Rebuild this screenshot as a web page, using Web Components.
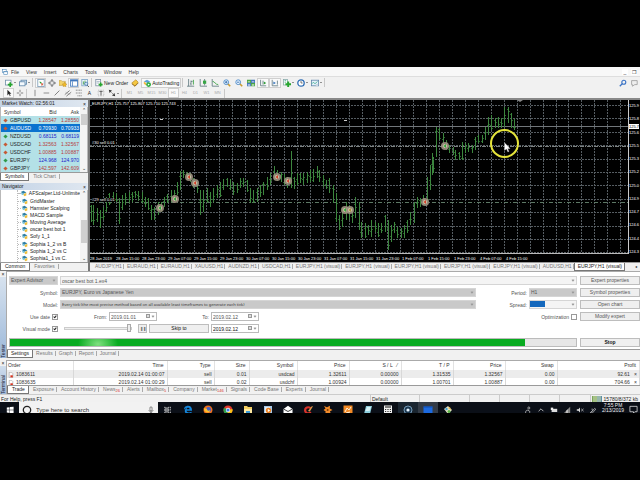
<!DOCTYPE html>
<html lang="en">
<head>
<meta charset="utf-8">
<title>Trading terminal</title>
<style>
  html, body { height: 100%; }
  body { margin: 0; background: #000; overflow: hidden; font: 5px/8px "Liberation Sans", Arial, sans-serif; color: #222; }
</style>
</head>
<body>
<trading-desktop></trading-desktop>

<script>
const RESET = `
  :host, *, *::before { box-sizing: border-box; }
  button, input, select, a { font: inherit; color: inherit; margin: 0; padding: 0; border: 0; border-radius: 0; background: none; text-decoration: none; appearance: none; outline: 0; }
  button { white-space: nowrap; }
  svg { display: block; flex: none; }
`;
function define(name, css, html) {
  customElements.define(name, class extends HTMLElement {
    constructor() {
      super();
      const root = this.attachShadow({ mode: 'open' });
      const t = document.createElement('template');
      t.innerHTML = `<style>${RESET}${css}</style>` + (typeof html === 'function' ? html(this) : html);
      root.append(t.content.cloneNode(true));
    }
  });
}

/* ---------- icons ---------- */
const ICONS = {
  app: '<rect x="1" y="1" width="6" height="5" fill="#fff" stroke="#4b86b8"/><rect x="3" y="4" width="6" height="5" fill="#fff" stroke="#4b86b8"/><path d="M3 4.500h6" stroke="#4b86b8"/>',
  newchart: '<rect x=".5" y="1.500" width="7" height="6" fill="#fff" stroke="#6e8fa8"/><path d="M6.500 4v6M3.500 7h6" stroke="#25a52c" stroke-width="2"/>',
  profile: '<rect x="2.500" y="1.500" width="7" height="5" fill="#dbeaf6" stroke="#5f87ab"/><rect x=".5" y="3.500" width="7" height="5" fill="#f4f9fd" stroke="#5f87ab"/>',
  market: '<rect x="1" y=".5" width="8" height="9" fill="#fff" stroke="#7a9ab5"/><path d="M3 3l3 1-2 2z" fill="#2b9c33"/><path d="M5 5l3 1-2 3z" fill="#d14a2e"/>',
  target: '<circle cx="5" cy="5" r="3" fill="#fff" stroke="#7b7f84"/><path d="M5 0v4M5 6v4M0 5h4M6 5h4" stroke="#555"/>',
  folder: '<path d="M0 2h3l1 1h4v5H0z" fill="#f3d36a" stroke="#b38e2d" stroke-width=".6"/><path d="M7 4l1 2 2 .3-1.500 1.500.3 2L7 9l-1.800.8.3-2L4 6.300 6 6z" fill="#f3bd28" stroke="#a5761c" stroke-width=".4"/>',
  term: '<rect x=".5" y="1" width="9" height="8" fill="#fff" stroke="#3f77bd"/><path d="M.5 2h9" stroke="#3f77bd" stroke-width="2"/><path d="M3 3v6" stroke="#3f77bd"/>',
  tester: '<rect x="1" y=".5" width="7" height="8" fill="#eef5fb" stroke="#7aa1c5"/><path d="M3 7V3M5 7V2" stroke="#3b9c3b"/><circle cx="6.500" cy="6" r="2" fill="#cfe3f5" stroke="#4679ab"/><path d="M8 8l2 2" stroke="#444"/>',
  order: '<rect x="1" y=".5" width="6" height="8" fill="#fff" stroke="#7a8ea2"/><path d="M2 3h4M2 5h3" stroke="#9ab"/><path d="M7 4.500v5M4.500 7h5" stroke="#25a52c" stroke-width="2"/>',
  book: '<path d="M1 5l5-4 3 3-4 5z" fill="#f5c842" stroke="#a87a18" stroke-width=".7"/><path d="M1 6l4 3 4-4" fill="none" stroke="#8f6414"/>',
  auto: '<path d="M1 3l4-2 4 2-3 2z" fill="#5aa0d8"/><path d="M1 3v3l3 2V5z" fill="#f1b943"/><circle cx="7" cy="7" r="3" fill="#25a83a"/><path d="M6 5.500v3L8.500 7z" fill="#fff"/>',
  bars: '<path d="M2 0v9M0 9h9M5 2v6M4 6h1M5 3h2" fill="none" stroke="#59747b"/><path d="M8 1v6" stroke="#2b9c33"/>',
  candles: '<path d="M1.500 0v9H10M7 0v8" stroke="#59747b" fill="none"/><rect x="5" y="2" width="4" height="4" fill="#36a544"/>',
  line: '<path d="M1.500 0v9H10" stroke="#59747b" fill="none"/><path d="M2 3c3 0 3 4 7 4" fill="none" stroke="#2b9c33"/>',
  zin: '<path d="M6 6l3 3" stroke="#c99b2e" stroke-width="2"/><circle cx="4" cy="4" r="3" fill="#e9f4ff" stroke="#3b7fc4"/><path d="M2.500 4h3M4 2.500v3" stroke="#245fa5"/>',
  zout: '<path d="M6 6l3 3" stroke="#c99b2e" stroke-width="2"/><circle cx="4" cy="4" r="3" fill="#e9f4ff" stroke="#3b7fc4"/><path d="M2.500 4h3" stroke="#245fa5"/>',
  tile: '<path d="M0 1h5v4H0zM5 5h5v4H5z" fill="#4aa546"/><path d="M5 1h5v4H5zM0 5h5v4H0z" fill="#4176bb"/><path d="M1 3h3v1H1zM6 3h3v1H6zM1 7h3v1H1zM6 7h3v1H6z" fill="#fff"/>',
  scroll: '<path d="M2 1v7.500h7M5 2v5" stroke="#59747b" fill="none"/><path d="M6 3l3 2-3 2z" fill="#2b9c33"/>',
  shift: '<path d="M1.500 1v7.500H9M8 2v5" stroke="#59747b" fill="none"/><path d="M3 3l3 2-3 2z" fill="#3877bd"/>',
  indic: '<rect x=".5" y=".5" width="5" height="7" fill="#fff" stroke="#8aa"/><path d="M2 2h2M2 4h2" stroke="#4a8"/><path d="M6.500 3v7M3 6.500h7" stroke="#25a52c" stroke-width="2.400"/>',
  clock: '<circle cx="5" cy="5" r="4" fill="#fff" stroke="#2d6cb4" stroke-width="1.600"/><path d="M5 2.500V5h2" fill="none" stroke="#333" stroke-width=".8"/>',
  tmpl: '<rect x=".5" y="1.500" width="9" height="7" fill="#e4f0fa" stroke="#5f87ab"/><path d="M1 6l2-2 2 2 3-3" stroke="#3a8" fill="none"/><path d="M6 6h3v3H6z" fill="#c8d6e2"/>',
  cursor: '<path d="M3 1v7l2-2 1 3 1-.5L6 6h2z" fill="#222"/>',
  cross: '<path d="M5 1v3M5 6v3M1 5h3M6 5h3" stroke="#666"/>',
  vert: '<path d="M5 1v8" stroke="#777"/>', horiz: '<path d="M2 5h7" stroke="#777"/>', trend: '<path d="M2 8l6-6" stroke="#666"/>',
  channel: '<path d="M1 7l6-5M3 9l6-5" stroke="#666"/><path d="M2 4l6 3" stroke="#999" stroke-width=".6"/>',
  fibo: '<path d="M1 1.500h8M1 5h8M3 8.500h6" stroke="#777" stroke-dasharray="1.500 .5"/>',
  label: '<rect x="1.500" y="1.500" width="7" height="7" fill="none" stroke="#aaa" stroke-dasharray="1 1"/><path d="M3 3h4M5 3v5" stroke="#444"/>',
  arrows: '<path d="M1 1l4 1-3 3zM9 9L5 8l3-3z" fill="#333"/><path d="M4 4l3 3" stroke="#888"/>',
  search: '<circle cx="6" cy="4" r="2.500" fill="none" stroke="#3c74c6" stroke-width="1.400"/><path d="M4 6L1 9" stroke="#3c74c6" stroke-width="1.600"/>',
  chat: '<path d="M2 2h7v5H6L3 9V7H2z" fill="#eee" stroke="#999"/>',
  win: '<path d="M1 2l3.500-.5v3.300H1zM5 1.400L9.500.8v4H5zM1 5.300h3.500v3.300L1 8.100zM5 5.300h4.500v4L5 8.700z" fill="#fff"/>',
  ring: '<circle cx="5" cy="5" r="3.700" fill="none" stroke="#222" stroke-width="1.300"/>',
  mic: '<rect x="3.700" y="1" width="2.600" height="5" rx="1.300" fill="none" stroke="#333" stroke-width=".7"/><path d="M2.500 5c0 3 5 3 5 0M5 7.500V9M3.500 9h3" fill="none" stroke="#333" stroke-width=".7"/>',
  tasks: '<path d="M1 1v1.500h5V1M1 9V7.500h5V9M1 4h5v2H1zM8 1v2M8 4v1.500M8 7v2" fill="none" stroke="#ddd"/>',
  edge: '<path d="M1 5C1 1.500 3.500.8 5 .8c3 0 4.200 2.200 4 4.900H3.500c.2 2 3 2.100 5 1.100v2C4.500 10.500 1.500 8.500 1.800 5.500 2.300 3.800 3.500 3 4.500 2.800 2.800 2.800 1.600 3.800 1 5zM3.700 4.200h2.900C6.500 2.400 4 2.400 3.700 4.200z" fill="#1688dd"/>',
  firefox: '<circle cx="5" cy="5" r="4.500" fill="#f0701f"/><circle cx="5.500" cy="4.500" r="2.500" fill="#4761c4"/><path d="M.8 3C2 4 3 3 4 4c0 2 2 2 3 1 0 3-3 3-4 2C1 6 1 5 .8 3z" fill="#ffbe2b"/>',
  chrome: '<circle cx="5" cy="5" r="4.500" fill="#e33b2e"/><path d="M5 5L1.100 2.800A4.500 4.500 0 0 0 4.500 9.500z" fill="#2ba24c"/><path d="M5 5L9.400 4A4.500 4.500 0 0 1 4.500 9.500z" fill="#fbc116"/><circle cx="5" cy="5" r="2.200" fill="#fff"/><circle cx="5" cy="5" r="1.600" fill="#3f7fe8"/>',
  explorer: '<path d="M1 1h3l1 1h4v7H1z" fill="#f3cf62"/><path d="M1 4h8v5H1z" fill="#ffe9a0"/><path d="M3 6h4v3H3z" fill="#3c9ad6"/>',
  media: '<rect x="1" y="1" width="8" height="8" fill="#a9c9e8"/><rect x="2" y="2" width="5" height="6" fill="#e5eef6"/><circle cx="5.500" cy="5.500" r="2.700" fill="#ee8322"/><path d="M4.800 4v3l2.400-1.500z" fill="#fff"/>',
  mail: '<path d="M.5 4L5 .8 9.500 4v5h-9z" fill="#fff"/><path d="M.8 4.200L5 6.500l4.200-2.300" fill="none" stroke="#111" stroke-width=".8"/>',
  ccl: '<path d="M8.500 2.500C5 0 1 2 1 5.200 1 9 5.500 10 8.500 8L7.500 6.500C5 8 3.300 7 3.300 5.200 3.300 3.400 5.500 2.700 7 4z" fill="#d8332b"/><path d="M5 6l4-5 .8.6-3 5z" fill="#e3a34c"/>',
  star: '<path d="M1 1l3 1.200L7 .8l-.2 2.700L9.500 5 7 6.200 8 9.500 5 8 2 9.500l.7-3L.5 5l2-1.500z" fill="#f28b2a"/><circle cx="4.600" cy="5" r="1" fill="#7b3d08"/>',
  orange: '<rect x=".5" y=".5" width="9" height="9" fill="#f28a26"/><path d="M2 7l2-4 2 2 2-3M3 8l4-1" fill="none" stroke="#fff2dd"/>',
  note: '<path d="M3 1h6L7 9H1z" fill="#8fd0de"/><path d="M4 2h4L6.500 6h-4z" fill="#d7f2f6"/>',
  calc: '<rect x="1" y=".5" width="8" height="9" fill="#f3f3f3"/><path d="M2 2h6" stroke="#333" stroke-width="1.200"/><path d="M2 4.500h6M2 6.500h6M2 8.500h6" stroke="#333" stroke-dasharray="1.200 1.200"/>',
  rec: '<circle cx="5" cy="5" r="4" fill="#1c3850" stroke="#7fa6c4" stroke-width=".9"/><circle cx="5" cy="5" r="1.600" fill="#e8f4ff"/>',
  bluewin: '<rect x=".5" y="1.500" width="9" height="7" fill="#1c6ae0"/><path d="M.5 2h9" stroke="#0f4cb0"/>',
  paint: '<path d="M1 4l4-3 4 4-4 4z" fill="#e8e2c4"/><circle cx="3.500" cy="4" r="1.200" fill="#3d9fd8"/><circle cx="6" cy="6.500" r="1.500" fill="#5cb548"/><path d="M5 3l3 2-1-3z" fill="#e4b43a"/>',
  people: '<circle cx="6" cy="2.500" r="1.300" fill="none" stroke="#ddd" stroke-width=".8"/><path d="M2 9c0-4 2-4 3-3.500C7 6 8 7 7 8.500" fill="none" stroke="#ddd" stroke-width=".9"/>',
  up: '<path d="M2 6.500l3-3 3 3" fill="none" stroke="#ddd"/>',
  batt: '<rect x="2" y="3.500" width="7" height="4" fill="#ddd"/><path d="M1 2h3v3H1z" fill="#eee"/>',
  wifi: '<path d="M1 9L9 1v8z" fill="#888"/><path d="M4 9V6l2-2v5z" fill="#ccc"/>',
  vol: '<path d="M1 4h2l2-2v6L3 6H1z" fill="#ddd"/><path d="M6.500 3.500l3 3M9.500 3.500l-3 3" stroke="#ddd" stroke-width=".8"/>',
  pen: '<path d="M2 9l5-6 1.500 1L4 9c-2 1-3-1-1-2s3-4 0-3" fill="none" stroke="#ddd" stroke-width=".8"/>',
  notif: '<path d="M1 1.500h8v6H6.500L5 9V7.500H1z" fill="none" stroke="#eee" stroke-width=".8"/>',
  expert: '<path d="M1 3l4-2 4 2.500-4 2z" fill="#2f7fa3"/><path d="M2 4v2l3 1.500V5.500z" fill="#58b3cf"/><path d="M5 6l4-2v4L6 9z" fill="#f0c03c"/>',
  doc: '<path d="M2 .5h4l2 2v7H2z" fill="#fff" stroke="#777" stroke-width=".7"/><path d="M4 5.500h4V9H4z" fill="#d8321e"/>',
};
const icon = (n, s = 9) => `<svg width="${s}" height="${s}" viewBox="0 0 10 10" aria-hidden="true">${ICONS[n]}</svg>`;

/* ---------- tabs ---------- */
define('tab-strip', `
  :host { display: flex; height: 9px; align-items: stretch; background: #f1f1f1; border-top: 1px solid #9a9a9a; overflow: hidden; flex: none; padding-left: var(--start, 0px); }
  button { padding: 0 var(--pad-r, 4px) 0 var(--pad-l, 4px); line-height: 7px; color: #777; position: relative; display: flex; flex: none; }
  button:not(.on)::after { content: ""; width: 1px; height: 5px; background: #aaa; position: absolute; right: 0; top: 1px; }
  button.on { background: #fff; color: #222; border: 1px solid #777; border-top: 0; line-height: 7px; }
  sub { color: #d6322c; font-size: 4px; line-height: 9px; vertical-align: baseline; }
  ::slotted(*) { margin-left: auto; padding-right: 3px; color: #222; font-size: 4px; line-height: 7px; }
`, el => el.getAttribute('tabs').split('|').map((t, i) => {
  const [a, b] = t.split('~');
  return `<button type="button" class="${i == el.getAttribute('active') ? 'on' : ''}">${a}${b ? `<sub>${b}</sub>` : ''}</button>`;
}).join('') + '<slot></slot>');

/* ---------- menu ---------- */
define('menu-bar', `
  :host { display: flex; flex: none; height: 10px; align-items: center; padding: 0 3px 0 2px; background: #f8f8f8; border-bottom: 1px solid #dedede; color: #333; }
  svg { margin-right: 3px; }
  button { margin-right: 7px; line-height: 8px; }
  .w { margin: 0 0 0 3px; background: #fff; width: 6px; line-height: 6px; }
  i { flex: 1; }
`, icon('app', 6) + ['File', 'View', 'Insert', 'Charts', 'Tools', 'Window', 'Help'].map(x => `<button type="button">${x}</button>`).join('') +
  '<i></i><button type="button" class="w" aria-label="Minimize">_</button><button type="button" class="w" aria-label="Restore">❐</button>');

/* ---------- toolbars ---------- */
const tb = (n, w = 'n', extra = '', cls = '') => `<button type="button" class="${w} ${cls}" aria-label="${n}">${icon(n, 8)}${extra}</button>`;
define('tool-bars', `
  :host { display: flex; flex: none; flex-direction: column; background: #f1f1f1; height: 23px; border-bottom: 2px solid #888; color: #222; }
  div { display: flex; height: 11px; align-items: center; padding: 0 1px 0 3px; }
  div + div { height: 10px; }
  button { display: flex; align-items: center; justify-content: center; height: 10px; flex: none; gap: 1px; }
  .n { width: 11px; } .m { width: 12px; } .d { width: 14px; } .t { font-size: 5px; padding: 0 1px; }
  .d::after { content: ""; border: 1px solid transparent; border-top: 1px solid #333; margin-top: 1px; }
  .on { background: #fafafa; border: 1px solid #cfcfcf; }
  .tf { width: 11px; color: #aaa; font-size: 4px; }
  hr { width: 1px; height: 9px; margin: 0 2px 0 1px; border: 0; background: #c8c8c8; flex: none; }
  i { flex: 1; }
`, `<div>${tb('newchart', 'd')}${tb('profile', 'd')}<hr>${tb('market', 'n', '', 'on')}${tb('target')}${tb('folder')}${tb('term', 'n', '', 'on')}${tb('tester')}<hr>
  ${tb('order', 't', '<span>New Order</span>')}${tb('book', 'm')}${tb('auto', 't', '<span>AutoTrading</span>', 'on')}<hr>
  ${['bars', 'candles', 'line', 'zin', 'zout', 'tile'].map(x => tb(x, 'm')).join('')}${tb('scroll', 'm', '', 'on')}${tb('shift', 'm', '', 'on')}${tb('indic', 'd')}${tb('clock', 'd')}${tb('tmpl', 'd')}<hr>
  <i></i>${tb('search', 'n')}${tb('chat', 'n')}</div>
  <div>${tb('cursor', 'n', '', 'on')}${tb('cross')}<hr>${['vert', 'horiz', 'trend', 'channel', 'fibo'].map(x => tb(x)).join('')}<button type="button" class="n">A</button>${tb('label')}${tb('arrows', 'd')}<hr>
  ${['M1', 'M5', 'M15', 'M30', 'H1', 'H4', 'D1', 'W1', 'MN'].map(x => `<button type="button" class="tf ${x == 'H1' ? 'on' : ''}">${x}</button>`).join('')}<hr></div>`);

/* ---------- side panels ---------- */
define('dock-panel', `
  :host { display: flex; flex-direction: column; }
  header { display: flex; flex: none; justify-content: space-between; align-items: center; height: 7px; padding: 0 2px; background: linear-gradient(90deg, #c3d3e6, #dfe7f0); color: #222; line-height: 7px; }
  header button { line-height: 6px; }
  section { display: flex; background: #fff; border: 1px solid #b9b9b9; border-width: 0 1px; flex: 1; min-height: 0; overflow: hidden; }
  .body { flex: 1; min-width: 0; overflow: hidden; display: flex; flex-direction: column; }
  .bar { width: 7px; flex: none; background: #f4f4f4; display: flex; flex-direction: column; align-items: center; font-size: 5px; line-height: 7px; }
  .thumb { width: 6px; background: #cfcfcf; }
  .bar span:first-child { margin-bottom: auto; }
`, el => `<header><span>${el.getAttribute('label')}</span><button type="button" aria-label="Close">×</button></header>
  <section><div class="body"><slot></slot></div><div class="bar"><span>⌃</span><span class="thumb" style="height:${el.getAttribute('thumb')}px;margin-bottom:${el.getAttribute('after')}px"></span><span>⌄</span></div></section>`);

define('quote-table', `
  :host { display: block; }
  table { width: 100%; border-collapse: collapse; table-layout: fixed; line-height: 8px; }
  th { font-weight: 400; text-align: right; height: 9px; color: #333; background: #fff; }
  td { height: 8px; text-align: right; background: #b4e1e7; line-height: 8px; }
  th, td { padding: 0 1px 0 0; }
  th:first-child, td:first-child { text-align: left; width: 43%; }
  th:first-child { padding-left: 3px; }
  td:first-child { padding-left: 2px; color: #222; }
  .down { color: #b83c3c; } .up { color: #2323c8; }
  .sel td, .sel td:first-child { background: #0a72cf; color: #fff; }
  b { display: inline-block; width: 3px; height: 3px; margin: 0 3px 1px 1px; transform: rotate(45deg); background: #c55a35; vertical-align: middle; }
  .up b { background: #2f9a48; }
`, () => `<table><tr><th>Symbol</th><th>Bid</th><th>Ask</th></tr>${[
  ['GBPUSD', '1.28547', '1.28550', 'down'], ['AUDUSD', '0.70930', '0.70933', 'sel'], ['NZDUSD', '0.68115', '0.68119', 'up'], ['USDCAD', '1.32563', '1.32567', 'down'],
  ['USDCHF', '1.00885', '1.00887', 'down'], ['EURJPY', '124.968', '124.970', 'up'], ['GBPJPY', '142.597', '142.609', 'down']
].map(r => `<tr class="${r[3]}"><td><b></b>${r[0]}</td><td>${r[1]}</td><td>${r[2]}</td></tr>`).join('')}</table>`);

define('nav-tree', `
  :host { display: block; flex: 1; min-height: 0; }
  ul { margin: 0 0 0 16px; padding: 0; list-style: none; height: 100%; display: flex; flex-direction: column; justify-content: space-between; border-left: 1px dotted #bbb; }
  li { display: flex; align-items: center; line-height: 7px; white-space: nowrap; color: #222; }
  li::before { content: ""; width: 3px; border-top: 1px dotted #bbb; }
  svg { margin-right: 2px; }
`, `<ul>${['AFScalper.Ltd-Unlimite', 'GridMaster', 'Hamster Scalping', 'MACD Sample', 'Moving Average', 'oscar best bot 1', 'Sofy 1_1', 'Sophia 1_2 vs B', 'Sophia 1_2 vs C', 'Sophia1_1 vs C.'].map(x => `<li>${icon('expert', 7)}<span>${x}</span></li>`).join('')}</ul>`);

/* ---------- chart ---------- */
const BARS = [];
const addBars = (x0, y0, list) => list.forEach(([x, a, b]) => BARS.push([Math.round(x0 + x / 3), Math.round(y0 + a / 3), Math.round(y0 + b / 3)]));
addBars(90, 165, [[3,120,170],[10,120,180],[20,130,170],[29,135,190],[38,125,165],[48,95,140],[58,85,120],[68,80,112],[78,85,110],[88,100,178],[97,90,135],[106,85,120],[116,82,115],[126,80,112],[135,78,100],[145,78,108],[155,80,115],[165,95,125],[174,100,135],[184,120,165],[193,125,165],[203,110,150],[213,110,140],[222,95,125],[232,88,115],[242,75,110],[251,75,100],[261,50,90],[270,18,75],[280,15,40],[290,20,45],[300,25,50],[310,40,70],[320,50,85],[330,75,150],[340,75,140],[350,70,115],[360,80,125],[370,70,110],[380,60,100],[390,50,95],[400,42,75],[410,40,65],[420,42,75],[430,50,90],[440,55,85],[450,38,70],[460,40,65],[470,45,80],[480,70,115],[490,75,115],[500,70,110],[510,60,95],[520,50,90],[530,35,75],[540,25,60],[552,3,45],[562,15,48],[572,20,50],[582,28,60],[592,35,68],[602,-42,70],[611,35,72],[621,25,60]]);
addBars(300, 165, [[0,25,55],[10,25,60],[20,20,55],[30,15,50],[40,12,50],[50,3,40],[58,15,50],[68,30,65],[78,45,72],[88,40,85],[98,60,115],[107,85,170],[117,150,195],[127,130,185],[137,110,165],[146,120,165],[156,125,175],[166,95,160],[176,110,195],[184,170,220],[194,175,220],[204,180,210],[214,165,215],[224,170,200],[234,175,215],[244,175,205],[254,150,200],[263,165,255],[273,180,230],[282,170,205],[292,185,220],[302,190,220],[311,180,220],[321,165,205],[331,140,180],[341,110,175],[350,95,130],[360,98,125],[370,90,120],[380,35,110],[390,0,75],[398,-25,25]]);
addBars(426, 60, [[19,280,345],[30,200,290],[40,205,240],[50,220,260],[60,240,270],[70,255,280],[80,260,285],[88,270,300],[98,275,300],[107,245,300],[117,250,280],[127,250,275],[137,255,278],[147,230,270],[157,225,250],[167,225,250],[176,200,240],[186,170,225],[196,165,210],[206,175,205],[215,170,205],[225,175,205],[235,140,200],[245,140,190],[254,160,205],[263,178,210]]);
const MARKS = [[160,208,'g'],[175,199,'g'],[189,177,'r'],[195,183,'r'],[277,177,'r'],[288,181,'r'],[345,210,'g'],[350,210,'y'],[425,202,'r'],[445,146,'g']];
const COL = { g: '#2ea83c', r: '#d0402c', y: '#a48a3c' };
const DATES = ['28 Jan 2019','28 Jan 15:00','28 Jan 23:00','29 Jan 07:00','29 Jan 15:00','29 Jan 23:00','30 Jan 07:00','30 Jan 15:00','30 Jan 23:00','31 Jan 07:00','31 Jan 15:00','31 Jan 23:00','1 Feb 07:00','1 Feb 15:00','1 Feb 23:00','4 Feb 07:00','4 Feb 15:00'];
function plotSvg() {
  let g = '', b = '', ticks = '';
  for (let k = 0; k < 41; k++) g += `M${Math.round(103 + 12.93 * k)}.5 100V254`;
  for (let k = 0; k < 12; k++) g += `M90 ${Math.round(105 + 13.4 * k)}.5H628`;
  BARS.forEach(([x, t, d], i) => {
    b += `M${x}.5 ${t}V${d}`;
    ticks += `M${x - 1} ${t + 1 + (i * 5) % Math.max(2, d - t - 2)}.5h1M${x + 1} ${d - 2 - (i * 3) % Math.max(2, d - t - 3)}.5h1`;
  });
  return `<svg viewBox="90 100 538 154" preserveAspectRatio="xMinYMin slice" aria-label="Price chart">
    <path d="${g}" stroke="#565d62" stroke-dasharray="2 1" fill="none"/>
    <path d="M90 126.500H628" stroke="#71767a"/>
    <path d="M90 146.500H628" stroke="#7d8282" stroke-dasharray="4 1 1 1"/><path d="M90 202.500H628" stroke="#5d7865" stroke-dasharray="4 2 1 2"/>
    <path d="${b}" stroke="#3c863e" fill="none"/><path d="${ticks}" stroke="#2a5f2c" fill="none"/>
    <path d="M517 100h6l-3 2z" fill="#888"/><path d="M160 119.500h3M344 120.500h3" stroke="#ccc"/>
    ${MARKS.map(([x, y, c]) => `<circle cx="${x}" cy="${y}" r="4" fill="#9c9080" fill-opacity=".9"/><circle cx="${x}" cy="${y}" r="2" fill="#cfc6a8"/><path d="M${x + 1} ${y - 2}l-2.500 2 2.500 2z" fill="${COL[c]}"/>`).join('')}
    <circle cx="504.500" cy="143.500" r="13.500" fill="none" stroke="#e5e43b" stroke-width="2"/>
    <path d="M504.500 142.500v8l2-1.500 1.300 3 1.300-.6-1.300-2.700h2.400z" fill="#fff" stroke="#888" stroke-width=".3"/>
  </svg>`;
}
define('price-chart', `
  :host { display: grid; grid-template-columns: minmax(0, 1fr) 12px; grid-template-rows: minmax(0, 1fr) 8px; background: #000; color: #fff; font-size: 4px; line-height: 4px; min-height: 0; }
  .plot { position: relative; overflow: hidden; border-bottom: 1px solid #bbb; }
  .plot svg { width: 100%; height: 100%; }
  .tag { position: absolute; left: 2px; white-space: nowrap; background: #000; }
  .prices { border-left: 1px solid #ccc; overflow: hidden; display: flex; flex-direction: column; justify-content: space-between; padding: 4px 0 0 0; position: relative; }
  .now { position: absolute; left: 0; top: 24px; background: #fff; color: #000; line-height: 5px; }
  .dates { grid-column: 1 / -1; display: flex; overflow: hidden; padding-top: 2px; line-height: 5px; }
  .dates span { flex: 0 0 26px; white-space: nowrap; }
`, () => `<div class="plot">${plotSvg()}
  <span class="tag" style="top:2px">EURJPY,H1 125.757 125.807 125.710 125.743</span><span class="tag" style="top:41px">#30 sell 0.01</span><span class="tag" style="top:98px">#29 sell 0.01</span></div>
  <div class="prices">${['125.9', '125.8', '125.6', '125.5', '125.3', '125.2', '125.0', '124.9', '124.7', '124.6', '124.4', '124.3'].map(p => `<span>${p}</span>`).join('')}<span class="now">125.7</span></div>
  <div class="dates">${DATES.map(d => `<span>${d}</span>`).join('')}</div>`);

/* ---------- docked panels with a vertical caption ---------- */
define('bottom-dock', `
  :host { display: flex; background: #f1f1f1; min-height: 0; }
  aside { width: 6px; flex: none; display: flex; flex-direction: column; align-items: center; justify-content: space-between; background: linear-gradient(#dbe5f0, #9db9da); }
  aside button { line-height: 6px; background: #f1f1f1; width: 100%; }
  aside span { writing-mode: vertical-rl; transform: rotate(180deg); line-height: 6px; color: #223; }
  main { flex: 1; min-width: 0; display: flex; flex-direction: column; border-left: 1px solid #aaa; border-top: 1px solid #aaa; background: #fff; }
`, el => `<aside><button type="button" aria-label="Close">×</button><span>${el.getAttribute('label')}</span></aside><main><slot></slot></main>`);

define('strategy-tester', `
  :host { display: grid; grid-template-columns: minmax(0, 1fr) 60px; column-gap: 3px; row-gap: 3px; grid-template-rows: 9px 9px 9px 9px 9px 11px; padding: 4px 0 0 2px; color: #555; flex: 1; min-height: 0; align-content: start; }
  .row { display: flex; align-items: stretch; gap: 2px; min-width: 0; }
  label { display: flex; align-items: center; justify-content: flex-end; line-height: 8px; gap: 2px; white-space: nowrap; }
  .l { width: 49px; flex: none; }
  .sel { position: relative; display: flex; min-width: 0; }
  .sel::after { content: ""; border: solid #999; border-width: 0 1px 1px 0; transform: rotate(45deg); position: absolute; right: 3px; top: 3px; width: 1px; height: 1px; }
  .sel.date::before { content: ""; width: 4px; height: 4px; border: 1px solid #999; position: absolute; right: 7px; top: 2px; background: #ddd; }
  select, input[type=text] { width: 100%; background: #c9c9c9; border: 1px solid #d5d5d5; padding: 0 1px; color: #555; opacity: 1; line-height: 7px; height: 100%; }
  #mo { font-family: "Noto Sans", sans-serif; font-size: 4px; color: #333; }
  input[type=text] { background: #f4f4f4; }
  .date input[type=text] { background: #fff; border-color: #bbb; }
  .grow { flex: 1; } .w50 { width: 49px; flex: none; } .w48 { width: 48px; flex: none; }
  button { border: 1px solid #bdbdbd; background: #efefef; line-height: 7px; }
  input[type=checkbox] { width: 6px; height: 6px; border: 1px solid #999; background: #fff; display: grid; place-items: center; flex: none; }
  input[type=checkbox]:checked::before { content: ""; width: 2px; height: 3px; border: solid #222; border-width: 0 1px 1px 0; transform: rotate(40deg); }
  input[type=range] { width: 68px; flex: none; height: 9px; margin: 0 4px; }
  input[type=range]::-webkit-slider-runnable-track { height: 3px; border: 1px solid #ccc; background: #eee; }
  input[type=range]::-webkit-slider-thumb { appearance: none; width: 4px; height: 8px; margin-top: -4px; background: #eee; border: 1px solid #aaa; }
  .from { width: 47px; } .to { width: 49px; }
  .from + .sel { margin-right: 1px; }
  .bar { border: 1px solid #bbb; background: #e6e6e6; display: flex; margin-top: 2px; }
  .bar span { width: 91%; background: radial-gradient(ellipse 20px 14px at 88px 5px, #7fe07f, #08ab20); }
  .stop { margin-top: 2px; font-weight: 700; color: #111; }
  .pause { width: 9px; flex: none; font-size: 4px; color: #777; } .skip { width: 60px; flex: none; color: #111; }
  .blue i { position: absolute; left: 1px; top: 1px; width: 15px; height: 6px; background: #1468bd; }
  .dark input[type=text] { color: #111; }
`, `<div class="row"><div class="sel w50"><select aria-label="Type" disabled><option>Expert Advisor</option></select></div><div class="sel grow"><input type="text" aria-label="Expert" value="oscar best bot 1.ex4"></div></div><button type="button">Expert properties</button>
  <div class="row"><label class="l" for="sy">Symbol:</label><div class="sel grow"><select id="sy"><option>EURJPY, Euro vs Japanese Yen</option></select></div><label class="w50" for="pe">Period:</label><div class="sel w48"><select id="pe"><option>H1</option></select></div></div><button type="button">Symbol properties</button>
  <div class="row"><label class="l" for="mo">Model:</label><div class="sel grow"><select id="mo"><option>Every tick (the most precise method based on all available least timeframes to generate each tick)</option></select></div><label class="w50" for="sp">Spread:</label><div class="sel w48 blue"><input type="text" id="sp"><i></i></div></div><button type="button">Open chart</button>
  <div class="row"><label class="l">Use date <input type="checkbox" checked></label><label class="from" for="fr">From:</label><div class="sel date w48"><input type="text" id="fr" value="2019.01.01"></div><label class="to" for="to">To:</label><div class="sel date w48"><input type="text" id="to" value="2019.02.12"></div><label class="grow">Optimization <input type="checkbox"></label></div><button type="button">Modify expert</button>
  <div class="row"><label class="l">Visual mode <input type="checkbox" checked></label><input type="range" aria-label="Speed" value="100"><button type="button" class="pause" aria-label="Pause">❚❚</button><button type="button" class="skip">Skip to</button><div class="sel date w48 dark"><input type="text" aria-label="Skip date" value="2019.02.12"></div></div><span></span>
  <div class="bar"><span></span></div><button type="button" class="stop">Stop</button>`);

define('trade-list', `
  :host { display: block; flex: 1; min-height: 0; overflow: hidden; background: #fff; color: #333; }
  table { width: 100%; border-collapse: collapse; table-layout: fixed; }
  th { font-weight: 400; height: 9px; line-height: 9px; padding: 0 3px; text-align: right; border-right: 1px solid #e2e2e2; }
  td { height: 8px; line-height: 8px; padding: 0 2px; text-align: right; border-right: 1px solid #d8d8d8; white-space: nowrap; }
  th:first-child, td:first-child { text-align: left; padding: 0 1px; }
  tr:nth-child(2) td { background: #ececec; }
  td svg { display: inline-block; vertical-align: middle; margin-right: 2px; }
`, () => `<table><colgroup>${[66, 94, 47, 35, 48, 52, 52, 52, 52, 52].map(w => `<col style="width:${w}px">`).join('')}<col></colgroup>
  <tr>${['Order', 'Time', 'Type', 'Size', 'Symbol', 'Price', 'S / L &nbsp; ⁄', 'T / P', 'Price', 'Swap', 'Profit'].map(h => `<th>${h}</th>`).join('')}</tr>
  ${[['1083611', '2019.02.14 01:00:07', 'sell', '0.01', 'usdcad', '1.32611', '0.00000', '1.31535', '1.32567', '0.00', '92.61 &nbsp; ×'], ['1083635', '2019.02.14 01:00:29', 'sell', '0.02', 'usdchf', '1.00924', '0.00000', '1.00701', '1.00887', '0.00', '704.66 &nbsp; ×']]
    .map(r => `<tr>${r.map((c, i) => `<td>${i ? '' : icon('doc', 6)}${c}</td>`).join('')}</tr>`).join('')}</table>`);

define('status-bar', `
  :host { display: flex; flex: none; height: 8px; overflow: hidden; background: #f1f1f1; border-top: 1px solid #ccc; align-items: flex-start; line-height: 8px; color: #222; }
  span { border-right: 1px solid #ccc; flex: 28 1 0; white-space: nowrap; padding-left: 1px; min-width: 0; }
  .a { flex: 366 1 0; } .b { flex: 47 1 0; } .k { flex: 48 1 0; border: 0; display: flex; gap: 2px; }
  svg { margin-top: 1px; }
`, `<span class="a">For Help, press F1</span><span class="b">Default</span><span class="b">&nbsp;</span><span>&nbsp;</span><span>&nbsp;</span><span>&nbsp;</span><span>&nbsp;</span><span class="k"><svg width="10" height="6" viewBox="0 0 10 6"><path d="M0 0h10v6H0z" fill="#7ba45b"/><path d="M5 0h5v6H5z" fill="#5c8fa7"/><path d="M2 0v6M4 0v6M6 0v6M8 0v6" stroke="#d3e0b2"/></svg>15780/8/372 kb</span>`);

define('task-bar', `
  :host { display: flex; flex: none; height: 11px; overflow: hidden; background: #0b0f17; color: #eee; align-items: flex-start; }
  button, .search { height: 15px; display: flex; align-items: center; justify-content: center; flex: none; }
  .start { width: 19px; }
  .search { width: 139px; background: #f2f2f2; color: #333; font-size: 6px; justify-content: flex-start; padding: 0 3px; gap: 4px; }
  input { flex: 1; min-width: 0; }
  input::placeholder { color: #333; opacity: 1; }
  .app { width: 20px; } .hi { background: #1a2530; } .hi2 { background: #333b46; }
  .tray { width: 13px; } i { flex: 1; }
  time { width: 28px; flex: none; text-align: center; line-height: 5px; padding-top: 1px; }
`, `<button type="button" class="start" aria-label="Start">${icon('win', 8)}</button>
  <div class="search">${icon('ring', 10)}<input type="text" placeholder="Type here to search" aria-label="Search">${icon('mic', 8)}</div>
  ${['tasks', 'edge', 'firefox', 'chrome', 'explorer', 'media', 'mail', 'ccl', 'star', 'orange', 'note', 'calc', 'rec', 'bluewin', 'paint'].map(n => `<button type="button" class="app ${n == 'rec' ? 'hi' : n == 'bluewin' ? 'hi2' : ''}" aria-label="${n}">${icon(n, n == 'tasks' ? 8 : 10)}</button>`).join('')}
  <i></i>${['people', 'up', 'batt', 'wifi', 'vol', 'pen'].map(n => `<button type="button" class="tray" aria-label="${n}">${icon(n, 8)}</button>`).join('')}<time>7:55 PM<br>2/13/2019</time><button type="button" class="tray" aria-label="Notifications">${icon('notif', 9)}</button>`);

/* ---------- page ---------- */
define('trading-desktop', `
  :host { display: flex; flex-direction: column; height: 100vh; padding: 67px 0; background: #000; }
  .mid { display: flex; flex: 171 1 0; min-height: 0; background: #f1f1f1; }
  .left { width: 88px; flex: none; display: flex; flex-direction: column; }
  .right { flex: 1; min-width: 0; display: flex; flex-direction: column; border-left: 2px solid #777; }
  price-chart { flex: 1; }
  .mw { flex: 72 1 0; min-height: 0; } .nv { flex: 78 1 0; min-height: 0; }
  .gap { height: 2px; flex: none; background: #f1f1f1; }
  .charts { --start: 2px; --pad-l: 3px; --pad-r: 2px; }
  bottom-dock { --pad-r: 3px; }
  .te { flex: 87 1 0; --pad-l: 3px; } .tm { flex: 34 1 0; }
`, `<menu-bar></menu-bar><tool-bars></tool-bars>
  <div class="mid"><div class="left">
    <dock-panel class="mw" label="Market Watch: 02:56:01" thumb="11" after="40"><quote-table></quote-table></dock-panel><tab-strip active="0" tabs="Symbols|Tick Chart"></tab-strip>
    <div class="gap"></div>
    <dock-panel class="nv" label="Navigator" thumb="23" after="12"><nav-tree></nav-tree></dock-panel><tab-strip active="0" tabs="Common|Favorites"></tab-strip></div>
  <div class="right"><price-chart></price-chart>
    <tab-strip class="charts" active="12" tabs="AUDJPY,H1|EURAUD,H1|EURAUD,H1|XAUUSD,H1|AUDNZD,H1|USDCAD,H1|EURJPY,H1 (visual)|EURJPY,H1 (visual)|EURJPY,H1 (visual)|EURJPY,H1 (visual)|EURJPY,H1 (visual)|AUDUSD,H1|EURJPY,H1 (visual)"><span>◂</span></tab-strip></div></div>
  <bottom-dock class="te" label="Tester"><strategy-tester></strategy-tester><tab-strip active="0" tabs="Settings|Results|Graph|Report|Journal"></tab-strip></bottom-dock>
  <div class="gap"></div>
  <bottom-dock class="tm" label="Terminal"><trade-list></trade-list><tab-strip active="0" tabs="Trade|Exposure|Account History|News~26|Alerts|Mailbox~5|Company|Market~146|Signals|Code Base|Experts|Journal"></tab-strip></bottom-dock>
  <status-bar></status-bar><task-bar></task-bar>`);
</script>
</body>
</html>
